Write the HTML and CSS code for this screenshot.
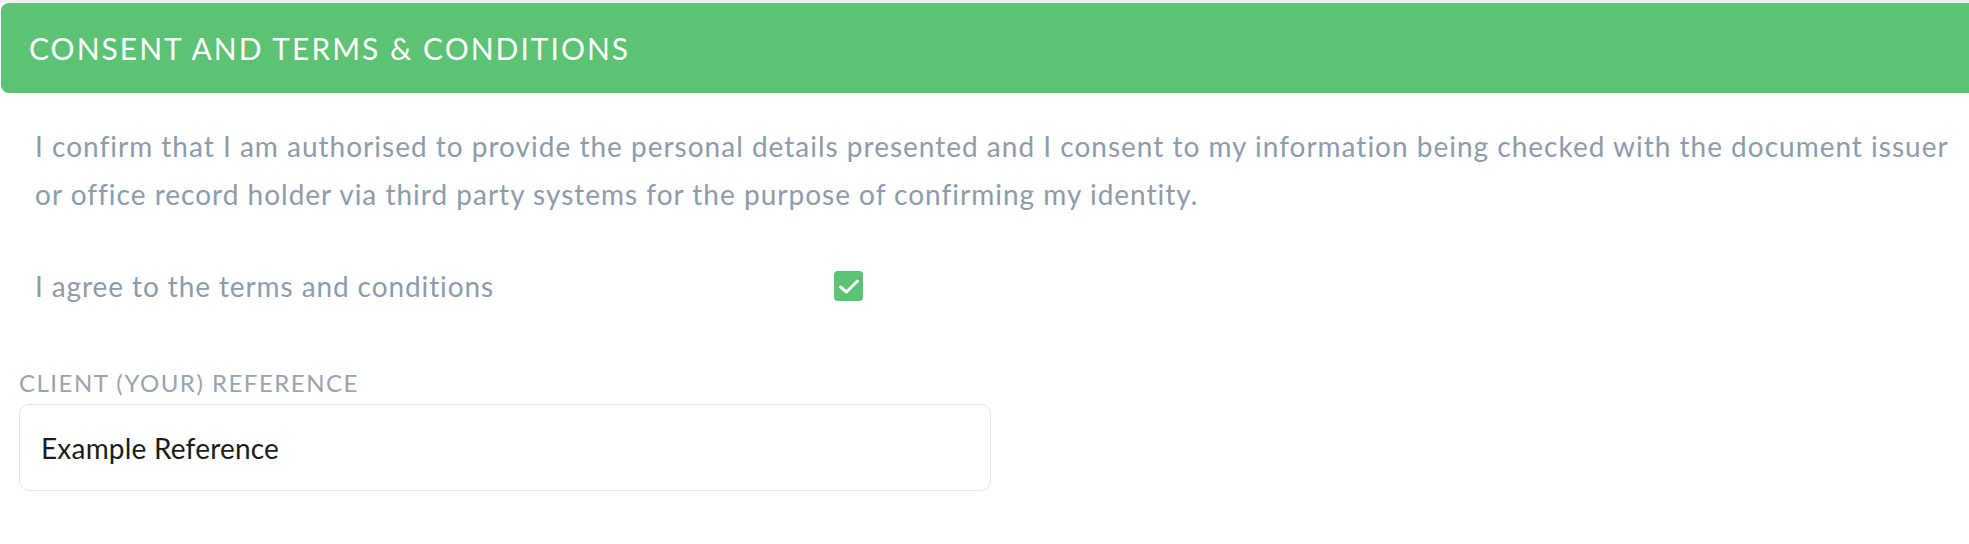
FILE: index.html
```html
<!DOCTYPE html>
<html lang="en">
<head>
    <meta charset="UTF-8">
    <meta name="viewport" content="width=device-width, initial-scale=1.0">
    <title>Consent</title>
    <link rel="stylesheet" href="styles.css">
</head>
<body>
    <div class="panel-header">
        <h2>CONSENT AND TERMS &amp; CONDITIONS</h2>
    </div>
    <div class="panel-body">
        <p class="consent-text">I confirm that I am authorised to provide the personal details presented and I consent to my information being checked with the document issuer or office record holder via third party systems for the purpose of confirming my identity.</p>
        <div class="agree-row">
            <span class="agree-label">I agree to the terms and conditions</span>
            <span class="checkbox">
                <svg width="22" height="17" viewBox="0 0 22 17"><path d="M2.5 9 L8.5 14 L19.5 3" fill="none" stroke="#fff" stroke-width="3" stroke-linecap="round" stroke-linejoin="round"/></svg>
            </span>
        </div>
    </div>
    <div class="field">
        <label class="field-label">CLIENT (YOUR) REFERENCE</label>
        <div class="field-input">Example Reference</div>
    </div>
</body>
</html>
```
FILE: styles.css
```css
body {
    font-family: Lato, "Open Sans", sans-serif;
    margin: 0;
    padding: 0;
    background-color: #fff;
    border-top: 3px solid #f1f1f1;
    overflow: hidden;
}
.panel-header {
    background-color: #5cc274;
    margin-left: 1px;
    height: 90px;
    border-radius: 8px 0 0 8px;
    display: flex;
    align-items: center;
    padding-left: 28px;
}
.panel-header h2 {
    margin: 0;
    color: #fff;
    font-weight: 400;
    font-size: 30px;
    letter-spacing: 2px;
}
.panel-body {
    padding: 0 20px 0 35px;
}
.consent-text {
    margin: 29px 0 0;
    font-size: 28px;
    line-height: 48px;
    letter-spacing: 1px;
    color: #8d9bab;
}
.agree-row {
    display: flex;
    align-items: center;
    margin-top: 51px;
}
.agree-label {
    width: 799px;
    font-size: 28px;
    letter-spacing: 0.9px;
    color: #8d9bab;
}
.checkbox {
    width: 29px;
    height: 30px;
    border-radius: 4px;
    background-color: #5cc274;
    display: flex;
    align-items: center;
    justify-content: center;
}
.field {
    padding: 0 19px;
    margin-top: 65px;
}
.field-label {
    display: block;
    font-size: 24px;
    letter-spacing: 1.5px;
    color: #9aa4af;
}
.field-input {
    width: 928px;
    height: 85px;
    margin-top: 7px;
    border: 1px solid #e6e6e6;
    border-radius: 10px;
    padding: 0 21px;
    display: flex;
    align-items: center;
    font-size: 28px;
    letter-spacing: 0.2px;
    color: #1b1b1b;
}
```
